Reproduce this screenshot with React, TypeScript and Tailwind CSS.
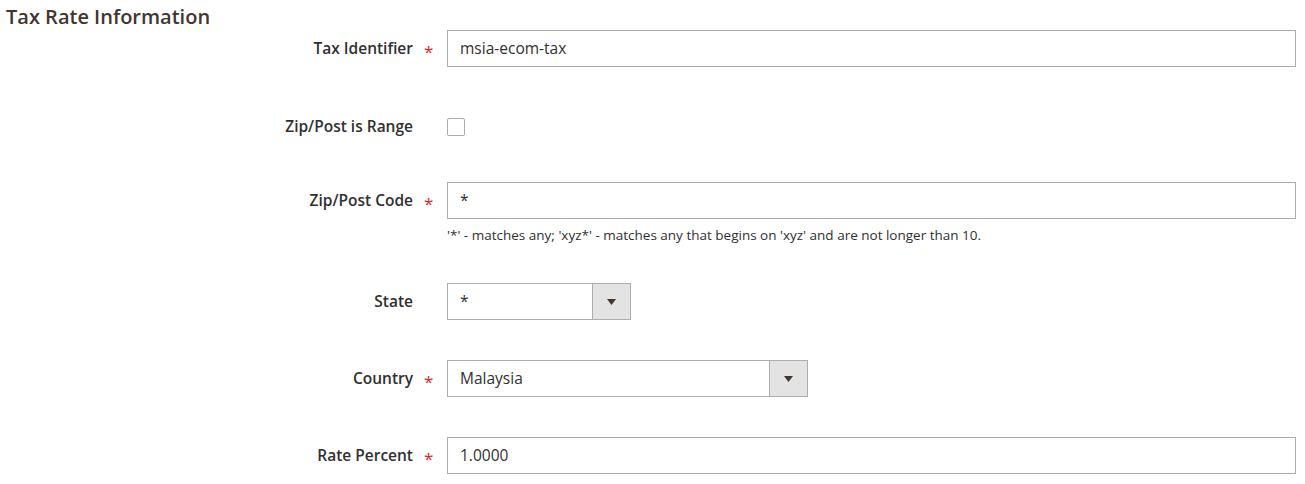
const FONT = "font-['Open_Sans',sans-serif]";

function Label({ text, required }: { text: string; required?: boolean }) {
  return (
    <div className="flex items-center shrink-0">
      <div className="w-[413px] text-right text-[15.5px] font-semibold text-[#303030]">{text}</div>
      <div className="w-[34px] pl-[11px] text-[17px] leading-none text-[#e22626]">
        {required ? <span className="relative top-[3px]">*</span> : null}
      </div>
    </div>
  );
}

function TextInput({ value }: { value: string }) {
  return (
    <div className="h-[37px] flex-1 mr-[9px] border border-[#adadad] bg-white px-[12px] flex items-center text-[15.5px] text-[#303030]">
      {value}
    </div>
  );
}

function SelectBox({ value, width }: { value: string; width: string }) {
  return (
    <div className={`h-[37px] ${width} border border-[#adadad] bg-white flex items-stretch text-[15.5px] text-[#303030]`}>
      <div className="flex-1 flex items-center px-[12px]">{value}</div>
      <div className="w-[38px] border-l border-[#adadad] bg-[#e3e3e3] flex items-center justify-center">
        <svg width="9" height="6" viewBox="0 0 9 6">
          <path d="M0 0 L9 0 L4.5 6 Z" fill="#41362f" />
        </svg>
      </div>
    </div>
  );
}

export default function App() {
  return (
    <div className={`${FONT} w-[1305px] h-[484px] bg-white overflow-hidden`}>
      <h2 className="pl-[6px] pt-[3px] h-[30px] text-[20px] font-semibold leading-[27px] text-[#41362f]">
        Tax Rate Information
      </h2>

      <div className="flex items-center">
        <Label text="Tax Identifier" required />
        <TextInput value="msia-ecom-tax" />
      </div>

      <div className="mt-[41px] h-[37px] flex items-center">
        <Label text="Zip/Post is Range" />
        <div className="w-[18px] h-[18px] border border-[#adadad] rounded-[2px] bg-white" />
      </div>

      <div className="mt-[37px] flex items-center">
        <Label text="Zip/Post Code" required />
        <TextInput value="*" />
      </div>
      <div className="pl-[447px] mt-[6px] text-[13.5px] leading-[20px] text-[#303030]">
        '*' - matches any; 'xyz*' - matches any that begins on 'xyz' and are not longer than 10.
      </div>

      <div className="mt-[38px] flex items-center">
        <Label text="State" />
        <SelectBox value="*" width="w-[184px]" />
      </div>

      <div className="mt-[40px] flex items-center">
        <Label text="Country" required />
        <SelectBox value="Malaysia" width="w-[361px]" />
      </div>

      <div className="mt-[40px] flex items-center">
        <Label text="Rate Percent" required />
        <TextInput value="1.0000" />
      </div>
    </div>
  );
}
